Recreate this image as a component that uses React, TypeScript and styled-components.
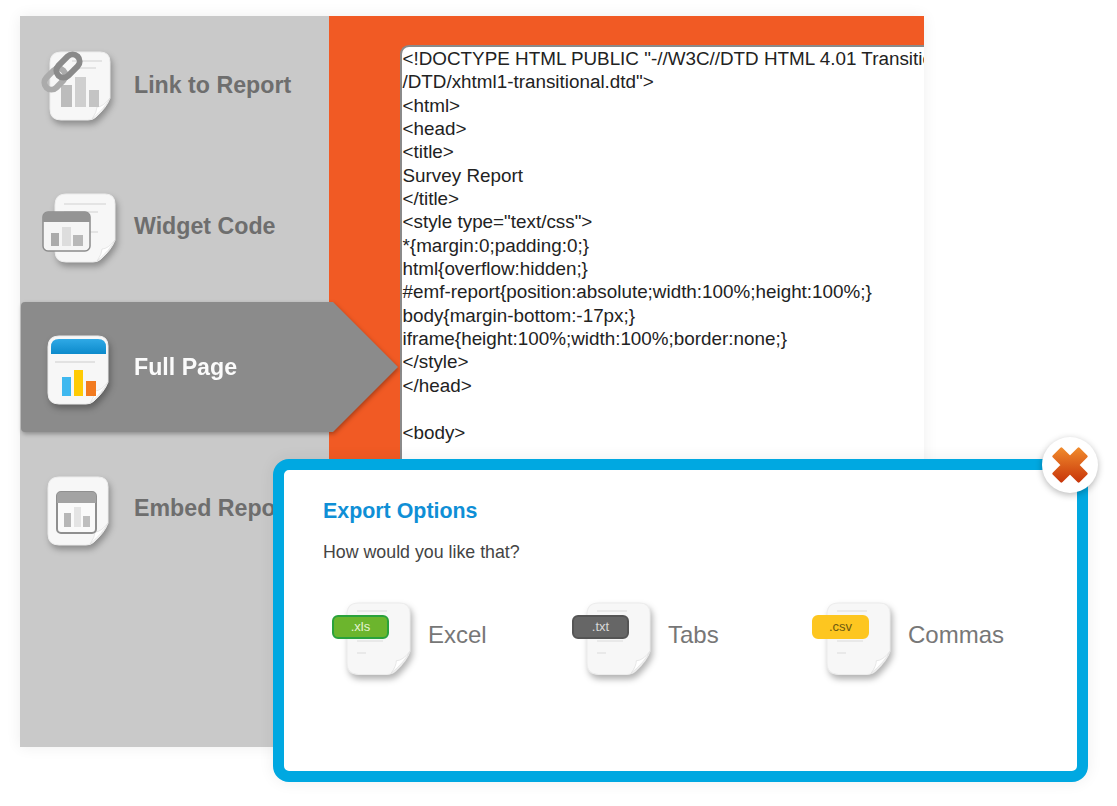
import React from "react";
import styled, { createGlobalStyle } from "styled-components";

const GlobalStyle = createGlobalStyle`
  html, body {
    margin: 0;
    padding: 0;
    background: #fff;
  }
  body {
    font-family: "Liberation Sans", Arial, sans-serif;
  }
`;

const Stage = styled.div`
  position: relative;
  width: 1117px;
  height: 806px;
  padding: 16px 0 0 20px;
  box-sizing: border-box;
  overflow: hidden;
`;

const Frame = styled.div`
  display: flex;
  width: 904px;
  height: 731px;
  box-shadow: 0 0 14px rgba(0, 0, 0, 0.07);
`;

const Sidebar = styled.nav`
  position: relative;
  z-index: 1;
  display: flex;
  flex-direction: column;
  gap: 11px;
  flex: none;
  width: 309px;
  padding-top: 4px;
  box-sizing: border-box;
  background: #c9c9c9;
`;

const NavItem = styled.div<{ $active?: boolean }>`
  position: relative;
  z-index: 0;
  display: flex;
  align-items: center;
  flex: none;
  width: ${(p) => (p.$active ? "378px" : "100%")};
  height: 130px;
  padding-left: 20px;
  box-sizing: border-box;
  filter: ${(p) =>
    p.$active ? "drop-shadow(1px 2px 2px rgba(0, 0, 0, 0.3))" : "none"};

  &::before {
    content: "";
    display: ${(p) => (p.$active ? "block" : "none")};
    position: absolute;
    z-index: -1;
    inset: 0 0 0 1px;
    background: #8b8b8b;
    border-radius: 4px 0 0 4px;
    clip-path: polygon(0 0, 312px 0, 100% 50%, 312px 100%, 0 100%);
  }
`;

const NavIcon = styled.span`
  display: block;
  flex: none;
  width: 80px;
  height: 80px;
  margin-right: 14px;

  svg {
    display: block;
    overflow: visible;
  }
`;

const NavLabel = styled.span<{ $active?: boolean }>`
  padding-top: 1px;
  font-size: 23.2px;
  font-weight: 700;
  white-space: nowrap;
  color: ${(p) => (p.$active ? "#fbfbfb" : "#6e6e6e")};
`;

const Main = styled.main`
  flex: 1;
  min-width: 0;
  padding: 29px 0 0 71px;
  box-sizing: border-box;
  background: #f15a24;
  overflow: hidden;
`;

const CodePane = styled.pre`
  height: 100%;
  margin: 0;
  padding: 0 0 0 0.5px;
  box-sizing: border-box;
  background: #fff;
  border-top: 2px solid #8a8a8a;
  border-left: 2px solid #8a8a8a;
  border-top-left-radius: 9px;
  font-family: "Liberation Sans", Arial, sans-serif;
  font-size: 18.85px;
  line-height: 23.35px;
  color: #222;
  white-space: pre;
  overflow: hidden;
`;

const Modal = styled.section`
  position: absolute;
  left: 273px;
  top: 459px;
  z-index: 2;
  width: 815px;
  height: 323px;
  padding: 29px 39px 0;
  box-sizing: border-box;
  background: #fff;
  border: 11px solid #00a8e1;
  border-radius: 16px;
  box-shadow: 0 0 16px rgba(0, 0, 0, 0.07);
`;

const CloseButton = styled.button`
  position: absolute;
  top: -33px;
  right: -21px;
  display: flex;
  align-items: center;
  justify-content: center;
  width: 56px;
  height: 56px;
  padding: 0;
  border: 0;
  border-radius: 50%;
  background: #fff;
  box-shadow: 0 2px 7px rgba(0, 0, 0, 0.28);
`;

const Title = styled.h2`
  margin: 0;
  font-size: 21.4px;
  line-height: 24px;
  font-weight: 700;
  color: #0f8fd6;
`;

const Subtitle = styled.p`
  margin: 19px 0 0;
  font-size: 17.8px;
  line-height: 20px;
  color: #444;
`;

const Options = styled.div`
  display: flex;
  margin: 33px 0 0 -1px;
`;

const Option = styled.div`
  display: flex;
  align-items: center;
  flex: none;
  width: 240px;
  padding-left: 11px;
  box-sizing: border-box;
`;

const FileIcon = styled.span`
  position: relative;
  display: block;
  flex: none;
  width: 80px;
  height: 80px;
  margin: 0 15px 0 0;

  svg {
    display: block;
    overflow: visible;
  }
`;

const FileTag = styled.span<{ $bg: string; $edge: string; $fg: string }>`
  position: absolute;
  left: -1px;
  top: 20px;
  width: 57px;
  height: 24px;
  box-sizing: border-box;
  border: 2px solid ${(p) => p.$edge};
  border-radius: 6px;
  background: ${(p) => p.$bg};
  color: ${(p) => p.$fg};
  font-size: 13px;
  line-height: 20px;
  text-align: center;
`;

const OptionLabel = styled.span`
  font-size: 24px;
  color: #777;
`;

const Paper = ({ x = 0, y = 0 }: { x?: number; y?: number }) => (
  <g
    transform={`translate(${x} ${y})`}
    style={{ filter: "drop-shadow(2px 4px 3px rgba(0,0,0,.3))" }}
  >
    <path
      d="M11 0H50Q60 0 60 10V46Q57 55 46 65Q43 68 38 68H11Q0 68 0 57V11Q0 0 11 0Z"
      fill="#f7f7f7"
      stroke="#ececec"
    />
    <path
      d="M60 46Q55 56 42 67Q47 60 47 55Q53 55 60 46Z"
      fill="#fff"
      stroke="#dadada"
      strokeWidth=".6"
    />
  </g>
);

const LinkIcon = () => (
  <svg width="80" height="80" viewBox="0 0 80 80">
    <Paper x={10} y={7} />
    <path d="M32 16H62M32 23H56" stroke="#dedede" strokeWidth="1.5" />
    <rect x="21" y="40" width="11" height="22" fill="#bcbcbc" />
    <rect x="35" y="32" width="11" height="30" fill="#cfcfcf" />
    <rect x="49" y="45" width="10" height="17" fill="#c4c4c4" />
    <g fill="none" strokeWidth="6" transform="rotate(-45 22 27)">
      <rect x="0" y="20" width="24" height="14" rx="7" stroke="#ababab" />
      <rect x="17" y="20" width="27" height="14" rx="7" stroke="#8a8a8a" />
    </g>
  </svg>
);

const WidgetIcon = () => (
  <svg width="80" height="80" viewBox="0 0 80 80">
    <Paper x={15} y={8} />
    <path d="M24 18H66M24 26H58M48 46H58" stroke="#dedede" strokeWidth="1.5" />
    <rect x="3" y="26" width="47" height="39" rx="5" fill="#f5f5f5" stroke="#8c8c8c" strokeWidth="1.5" />
    <path d="M3 36V31Q3 26 8 26H45Q50 26 50 31V36Z" fill="#949494" />
    <rect x="11" y="47" width="8" height="13" fill="#ababab" />
    <rect x="22" y="41" width="9" height="19" fill="#dddddd" />
    <rect x="33" y="49" width="10" height="11" fill="#b8b8b8" />
  </svg>
);

const FullPageIcon = () => (
  <svg width="80" height="80" viewBox="0 0 80 80">
    <defs>
      <linearGradient id="fullHead" x1="0" y1="0" x2="0" y2="1">
        <stop offset="0" stopColor="#2fa9e6" />
        <stop offset="1" stopColor="#0c8acb" />
      </linearGradient>
    </defs>
    <Paper x={8} y={9} />
    <path d="M11 20Q11 12 19 12H58Q66 12 66 20V27H11Z" fill="url(#fullHead)" />
    <path d="M15 35H55" stroke="#e2e2e2" strokeWidth="2" />
    <rect x="22" y="50" width="9" height="19" fill="#3fb8ef" />
    <rect x="34" y="43" width="9" height="26" fill="#ffcb05" />
    <rect x="46" y="54" width="10" height="15" fill="#f27b21" />
  </svg>
);

const EmbedIcon = () => (
  <svg width="80" height="80" viewBox="0 0 80 80">
    <Paper x={8} y={9} />
    <rect x="17" y="24" width="39" height="41" rx="4" fill="#fafafa" stroke="#8f8f8f" strokeWidth="2" />
    <path d="M17 35V28Q17 24 21 24H52Q56 24 56 28V35Z" fill="#a3a3a3" />
    <rect x="24" y="45" width="7" height="14" fill="#b7b7b7" />
    <rect x="34" y="39" width="7" height="20" fill="#e4e4e4" />
    <rect x="43" y="48" width="7" height="11" fill="#bebebe" />
  </svg>
);

const ExportPaper = () => (
  <svg width="80" height="80" viewBox="0 0 80 80">
    <g transform="translate(14 8) scale(1.05)">
      <Paper />
    </g>
    <path d="M24 16H54M24 21H48M24 46H50M24 58H33" stroke="#dcdcdc" strokeWidth="1.2" />
  </svg>
);

const CloseIcon = () => (
  <svg width="38" height="38" viewBox="-2 -2 44 44">
    <defs>
      <linearGradient id="closeFill" x1="0" y1="0" x2="0" y2="40" gradientUnits="userSpaceOnUse">
        <stop offset="0" stopColor="#f08a2c" />
        <stop offset="1" stopColor="#c8360a" />
      </linearGradient>
    </defs>
    <path
      d="M10 1L20 11L30 1L39 10L29 20L39 30L30 39L20 29L10 39L1 30L11 20L1 10Z"
      fill="url(#closeFill)"
      stroke="url(#closeFill)"
      strokeWidth="3"
      strokeLinejoin="round"
    />
  </svg>
);

const CODE = `<!DOCTYPE HTML PUBLIC "-//W3C//DTD HTML 4.01 Transitional//EN"
/DTD/xhtml1-transitional.dtd">
<html>
<head>
<title>
Survey Report
</title>
<style type="text/css">
*{margin:0;padding:0;}
html{overflow:hidden;}
#emf-report{position:absolute;width:100%;height:100%;}
body{margin-bottom:-17px;}
iframe{height:100%;width:100%;border:none;}
</style>
</head>

<body>`;

const NAV = [
  { label: "Link to Report", icon: <LinkIcon /> },
  { label: "Widget Code", icon: <WidgetIcon /> },
  { label: "Full Page", icon: <FullPageIcon />, active: true },
  { label: "Embed Report", icon: <EmbedIcon /> },
];

const EXPORTS = [
  { label: "Excel", ext: ".xls", bg: "#6cb52d", edge: "#2aa23c", fg: "#e4f3d2" },
  { label: "Tabs", ext: ".txt", bg: "#666666", edge: "#555555", fg: "#d8d8d8" },
  { label: "Commas", ext: ".csv", bg: "#fdc620", edge: "#fdc620", fg: "#6d5a10" },
];

const App = () => {
  return (
    <Stage>
      <GlobalStyle />
      <Frame>
        <Sidebar>
          {NAV.map((item) => (
            <NavItem key={item.label} $active={item.active}>
              <NavIcon>{item.icon}</NavIcon>
              <NavLabel $active={item.active}>{item.label}</NavLabel>
            </NavItem>
          ))}
        </Sidebar>
        <Main>
          <CodePane>{CODE}</CodePane>
        </Main>
      </Frame>
      <Modal>
        <CloseButton aria-label="Close">
          <CloseIcon />
        </CloseButton>
        <Title>Export Options</Title>
        <Subtitle>How would you like that?</Subtitle>
        <Options>
          {EXPORTS.map((item) => (
            <Option key={item.label}>
              <FileIcon>
                <ExportPaper />
                <FileTag $bg={item.bg} $edge={item.edge} $fg={item.fg}>
                  {item.ext}
                </FileTag>
              </FileIcon>
              <OptionLabel>{item.label}</OptionLabel>
            </Option>
          ))}
        </Options>
      </Modal>
    </Stage>
  );
};

export default App;
